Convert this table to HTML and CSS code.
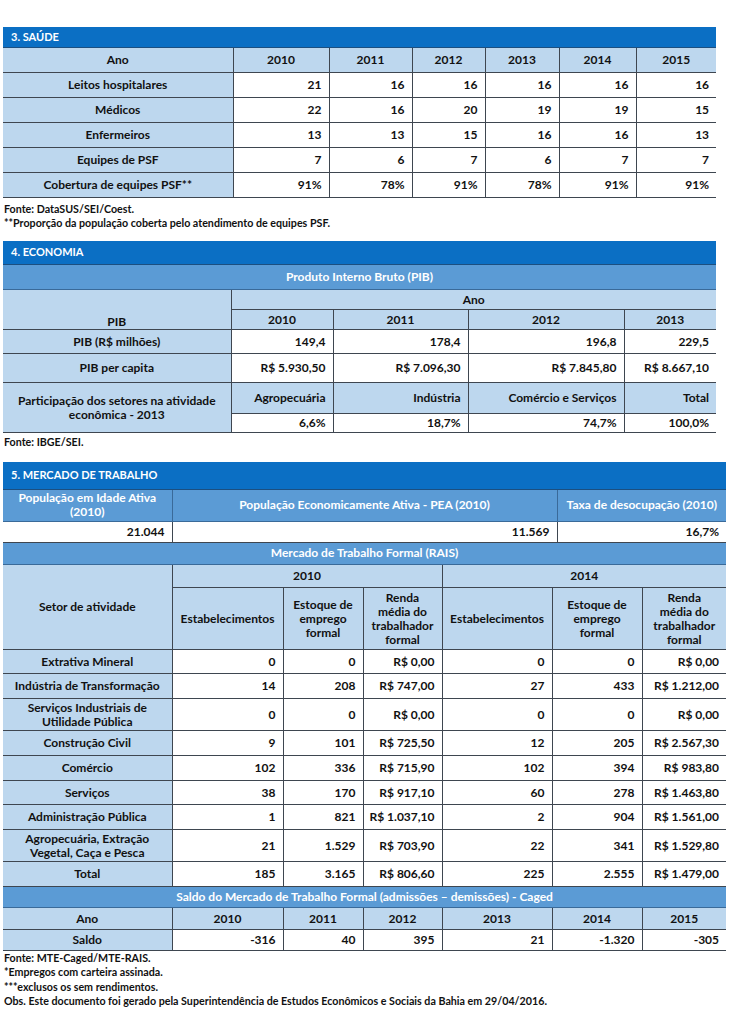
FILE: index.html
```html
<!DOCTYPE html>
<html lang="pt">
<head>
<meta charset="utf-8">
<link rel="stylesheet" href="styles.css">
</head>
<body>
<div class="page">

  <section class="sec sec-saude">
    <table class="tbl w713">
      <colgroup><col style="width:230px"><col style="width:96px"><col style="width:83px"><col style="width:73px"><col style="width:74px"><col style="width:77px"><col style="width:80px"></colgroup>
      <tr class="title h20"><td colspan="7">3. SAÚDE</td></tr>
      <tr class="lb h25"><td>Ano</td><td>2010</td><td>2011</td><td>2012</td><td>2013</td><td>2014</td><td>2015</td></tr>
      <tr class="h25"><td class="lbl">Leitos hospitalares</td><td>21</td><td>16</td><td>16</td><td>16</td><td>16</td><td>16</td></tr>
      <tr class="h25"><td class="lbl">Médicos</td><td>22</td><td>16</td><td>20</td><td>19</td><td>19</td><td>15</td></tr>
      <tr class="h25"><td class="lbl">Enfermeiros</td><td>13</td><td>13</td><td>15</td><td>16</td><td>16</td><td>13</td></tr>
      <tr class="h25"><td class="lbl">Equipes de PSF</td><td>7</td><td>6</td><td>7</td><td>6</td><td>7</td><td>7</td></tr>
      <tr class="h25"><td class="lbl">Cobertura de equipes PSF**</td><td>91%</td><td>78%</td><td>91%</td><td>78%</td><td>91%</td><td>91%</td></tr>
    </table>
    <div class="notes n1">
      <p>Fonte: DataSUS/SEI/Coest.</p>
      <p>**Proporção da população coberta pelo atendimento de equipes PSF.</p>
    </div>
  </section>

  <section class="sec sec-eco">
    <table class="tbl w713">
      <colgroup><col style="width:228px"><col style="width:102px"><col style="width:135px"><col style="width:156px"><col style="width:92px"></colgroup>
      <tr class="title h24"><td colspan="5">4. ECONOMIA</td></tr>
      <tr class="mb h25"><td colspan="5">Produto Interno Bruto (PIB)</td></tr>
      <tr class="lb h20"><td rowspan="2" class="bottom">PIB</td><td colspan="4">Ano</td></tr>
      <tr class="lb h20"><td>2010</td><td>2011</td><td>2012</td><td>2013</td></tr>
      <tr class="h24"><td class="lbl">PIB (R$ milhões)</td><td>149,4</td><td>178,4</td><td>196,8</td><td>229,5</td></tr>
      <tr class="h29"><td class="lbl">PIB per capita</td><td>R$ 5.930,50</td><td>R$ 7.096,30</td><td>R$ 7.845,80</td><td>R$ 8.667,10</td></tr>
      <tr class="h31 lbr"><td rowspan="2" class="lbl">Participação dos setores na atividade econômica - 2013</td><td>Agropecuária</td><td>Indústria</td><td>Comércio e Serviços</td><td>Total</td></tr>
      <tr class="h19"><td>6,6%</td><td>18,7%</td><td>74,7%</td><td>100,0%</td></tr>
    </table>
    <div class="notes n2">
      <p>Fonte: IBGE/SEI.</p>
    </div>
  </section>

  <section class="sec sec-trab">
    <table class="tbl w723">
      <colgroup><col style="width:169px"><col style="width:385px"><col style="width:169px"></colgroup>
      <tr class="title h27"><td colspan="3">5. MERCADO DE TRABALHO</td></tr>
      <tr class="mb h32"><td>População em Idade Ativa (2010)</td><td>População Economicamente Ativa - PEA (2010)</td><td>Taxa de desocupação (2010)</td></tr>
      <tr class="h21"><td>21.044</td><td>11.569</td><td>16,7%</td></tr>
    </table>
    <table class="tbl w723 rais">
      <colgroup><col style="width:169px"><col style="width:111px"><col style="width:80px"><col style="width:79px"><col style="width:110px"><col style="width:90px"><col style="width:84px"></colgroup>
      <tr class="mb h22"><td colspan="7">Mercado de Trabalho Formal (RAIS)</td></tr>
      <tr class="lb h23"><td rowspan="2">Setor de atividade</td><td colspan="3">2010</td><td colspan="3">2014</td></tr>
      <tr class="lb h62"><td>Estabelecimentos</td><td>Estoque de<br>emprego<br>formal</td><td>Renda<br>média do<br>trabalhador<br>formal</td><td>Estabelecimentos</td><td>Estoque de<br>emprego<br>formal</td><td>Renda<br>média do<br>trabalhador<br>formal</td></tr>
      <tr class="h24"><td class="lbl">Extrativa Mineral</td><td>0</td><td>0</td><td>R$ 0,00</td><td>0</td><td>0</td><td>R$ 0,00</td></tr>
      <tr class="h25"><td class="lbl">Indústria de Transformação</td><td>14</td><td>208</td><td>R$ 747,00</td><td>27</td><td>433</td><td>R$ 1.212,00</td></tr>
      <tr class="h32"><td class="lbl">Serviços Industriais de Utilidade Pública</td><td>0</td><td>0</td><td>R$ 0,00</td><td>0</td><td>0</td><td>R$ 0,00</td></tr>
      <tr class="h25"><td class="lbl">Construção Civil</td><td>9</td><td>101</td><td>R$ 725,50</td><td>12</td><td>205</td><td>R$ 2.567,30</td></tr>
      <tr class="h25"><td class="lbl">Comércio</td><td>102</td><td>336</td><td>R$ 715,90</td><td>102</td><td>394</td><td>R$ 983,80</td></tr>
      <tr class="h24"><td class="lbl">Serviços</td><td>38</td><td>170</td><td>R$ 917,10</td><td>60</td><td>278</td><td>R$ 1.463,80</td></tr>
      <tr class="h25"><td class="lbl">Administração Pública</td><td>1</td><td>821</td><td>R$ 1.037,10</td><td>2</td><td>904</td><td>R$ 1.561,00</td></tr>
      <tr class="h32"><td class="lbl">Agropecuária, Extração Vegetal, Caça e Pesca</td><td>21</td><td>1.529</td><td>R$ 703,90</td><td>22</td><td>341</td><td>R$ 1.529,80</td></tr>
      <tr class="h25"><td class="lbl">Total</td><td>185</td><td>3.165</td><td>R$ 806,60</td><td>225</td><td>2.555</td><td>R$ 1.479,00</td></tr>
      <tr class="mb h21"><td colspan="7">Saldo do Mercado de Trabalho Formal (admissões – demissões) - Caged</td></tr>
      <tr class="lb h22"><td>Ano</td><td>2010</td><td>2011</td><td>2012</td><td>2013</td><td>2014</td><td>2015</td></tr>
      <tr class="h21"><td class="lbl">Saldo</td><td>-316</td><td>40</td><td>395</td><td>21</td><td>-1.320</td><td>-305</td></tr>
    </table>
    <div class="notes n3">
      <p>Fonte: MTE-Caged/MTE-RAIS.</p>
      <p>*Empregos com carteira assinada.</p>
      <p>***exclusos os sem rendimentos.</p>
      <p>Obs. Este documento foi gerado pela Superintendência de Estudos Econômicos e Sociais da Bahia em 29/04/2016.</p>
    </div>
  </section>

</div>
</body>
</html>
```

FILE: styles.css
```css
html, body {
  margin: 0;
  padding: 0;
  background: #ffffff;
}
body {
  font-family: Lato, "Open Sans", "Liberation Sans", sans-serif;
  font-weight: 700;
  font-size: 12px;
  color: #111111;
}
.page {
  padding: 27px 0 0 3px;
}
.tbl {
  border-collapse: collapse;
  table-layout: fixed;
}
.w713 { width: 713px; }
.w723 { width: 723px; }
.tbl td {
  border: 1px solid #3e4650;
  padding: 0 7px 0 2px;
  text-align: right;
  vertical-align: middle;
  line-height: 14px;
  background: #ffffff;
  box-sizing: border-box;
  white-space: nowrap;
}
.tbl tr td:first-child { border-left: none; }
.tbl tr td:last-child { border-right: none; }
.tbl td.lbl {
  background: #bdd7ee;
  text-align: center;
  white-space: normal;
  padding: 0 7px;
}
.tbl tr.title td {
  background: #0b6fc4;
  color: #ffffff;
  text-align: left;
  padding-left: 8px;
  border: none;
  border-bottom: 1px solid #1c4f80;
  font-size: 11px;
}
.tbl tr.mb td {
  background: #5b9bd5;
  color: #ffffff;
  text-align: center;
  border-color: #3a6a99;
  white-space: normal;
  padding: 0 7px;
}
.tbl tr.lb td {
  background: #bdd7ee;
  text-align: center;
  padding: 0 4px;
}
.tbl tr.lbr td {
  background: #bdd7ee;
  text-align: right;
}
.tbl tr.lbr td.lbl { text-align: center; }
.tbl td.bottom { vertical-align: bottom; padding-bottom: 3px; }
.rais tr.mb td { border-top: none; }
.h19 { height: 19px; }
.h20 { height: 20px; }
.h21 { height: 21px; }
.h22 { height: 22px; }
.h23 { height: 23px; }
.h24 { height: 24px; }
.h25 { height: 25px; }
.h27 { height: 27px; }
.h29 { height: 29px; }
.h31 { height: 31px; }
.h32 { height: 32px; }
.h62 { height: 62px; }
.notes p {
  margin: 0;
  font-size: 10.7px;
  line-height: 14.3px;
  padding-left: 1px;
}
.n1 { padding-top: 4px; height: 39px; }
.n2 { padding-top: 2px; height: 27px; }
.n3 { padding-top: 0px; }
```
